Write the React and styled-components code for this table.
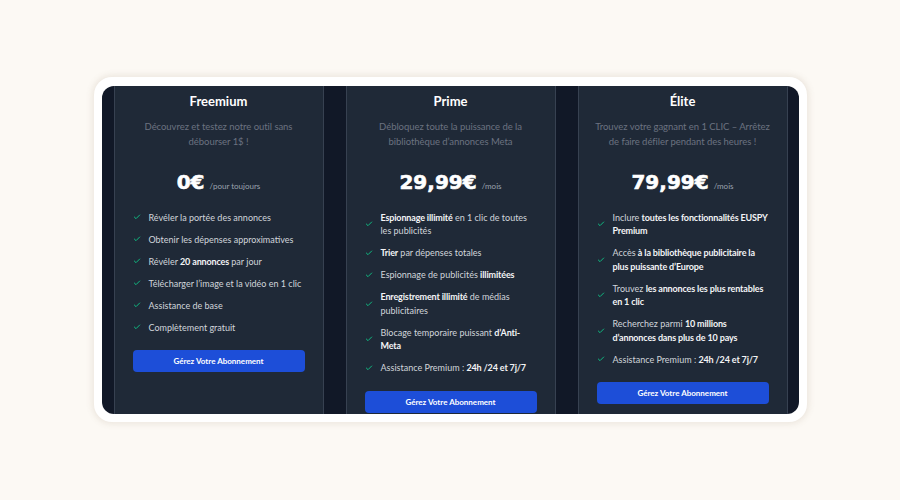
import React from "react";
import styled, { createGlobalStyle } from "styled-components";

const GlobalStyle = createGlobalStyle`
  html, body {
    margin: 0;
    padding: 0;
    background: #fcf9f4;
  }
  body {
    font-family: Lato, "Open Sans", sans-serif;
  }
`;

const plans = [
  {
    name: "Freemium",
    desc: "Découvrez et testez notre outil sans débourser 1$ !",
    price: "0€",
    period: "/pour toujours",
    features: [
      ["Révéler la portée des annonces"],
      ["Obtenir les dépenses approximatives"],
      ["Révéler ", <b key="b">20 annonces</b>, " par jour"],
      ["Télécharger l’image et la vidéo en 1 clic"],
      ["Assistance de base"],
      ["Complètement gratuit"],
    ],
  },
  {
    name: "Prime",
    desc: "Débloquez toute la puissance de la bibliothèque d’annonces Meta",
    price: "29,99€",
    period: "/mois",
    features: [
      [<b key="b">Espionnage illimité</b>, " en 1 clic de toutes", <br key="r" />, "les publicités"],
      [<b key="b">Trier</b>, " par dépenses totales"],
      ["Espionnage de publicités ", <b key="b">illimitées</b>],
      [<b key="b">Enregistrement illimité</b>, " de médias", <br key="r" />, "publicitaires"],
      ["Blocage temporaire puissant ", <b key="b">d’Anti-<br />Meta</b>],
      ["Assistance Premium : ", <b key="b">24h /24 et 7j/7</b>],
    ],
  },
  {
    name: "Élite",
    desc: "Trouvez votre gagnant en 1 CLIC – Arrêtez de faire défiler pendant des heures !",
    price: "79,99€",
    period: "/mois",
    features: [
      ["Inclure ", <b key="b">toutes les fonctionnalités EUSPY<br />Premium</b>],
      ["Accès ", <b key="b">à la bibliothèque publicitaire la<br />plus puissante d’Europe</b>],
      ["Trouvez ", <b key="b">les annonces les plus rentables<br />en 1 clic</b>],
      ["Recherchez parmi ", <b key="b">10 millions<br />d’annonces dans plus de 10 pays</b>],
      ["Assistance Premium : ", <b key="b">24h /24 et 7j/7</b>],
    ],
  },
];

function CheckIcon() {
  return (
    <svg width="8" height="8" viewBox="0 0 24 24" fill="none" stroke="#10b981" strokeWidth="3" strokeLinecap="round" strokeLinejoin="round">
      <polyline points="20 6 9 17 4 12" />
    </svg>
  );
}

function PlanCard({ plan }) {
  return (
    <Card>
      <Title>{plan.name}</Title>
      <Desc>{plan.desc}</Desc>
      <PriceRow>
        <Price>{plan.price}</Price>
        <Period>{plan.period}</Period>
      </PriceRow>
      <Features>
        {plan.features.map((f, i) => (
          <Feature key={i}>
            <CheckWrap>
              <CheckIcon />
            </CheckWrap>
            <span>{f}</span>
          </Feature>
        ))}
      </Features>
      <Button>Gérez Votre Abonnement</Button>
    </Card>
  );
}

export default function App() {
  return (
    <>
      <GlobalStyle />
      <Page>
        <Frame>
          <Panel>
            {plans.map((p) => (
              <PlanCard key={p.name} plan={p} />
            ))}
          </Panel>
        </Frame>
      </Page>
    </>
  );
}

const Page = styled.div`
  width: 900px;
  height: 500px;
  display: flex;
  align-items: center;
  justify-content: center;
`;

const Frame = styled.div`
  width: 697px;
  padding: 9px 8px 8px 8px;
  background: #ffffff;
  border-radius: 18px;
  box-shadow: 0 0 6px 2px rgba(120, 100, 70, 0.12);
  margin-top: -2px;
`;

const Panel = styled.div`
  height: 328px;
  background: #111827;
  border-radius: 12px;
  overflow: hidden;
  display: grid;
  grid-template-columns: repeat(3, 1fr);
  gap: 22px;
  padding: 0 11px 0 12px;
  align-items: start;
`;

const Card = styled.div`
  min-height: 360px;
  background: #1f2937;
  border-left: 1px solid #374151;
  border-right: 1px solid #374151;
  padding: 6px 18px 0 18px;
  display: flex;
  flex-direction: column;
`;

const Title = styled.h3`
  margin: 0;
  text-align: center;
  color: #ffffff;
  font-size: 13px;
  line-height: 18px;
  font-weight: 700;
`;

const Desc = styled.p`
  margin: 9px -4px 0;
  text-align: center;
  color: #6b7280;
  font-size: 9.5px;
  line-height: 15px;
  font-weight: 400;
  letter-spacing: -0.05px;
`;

const PriceRow = styled.div`
  margin-top: 19px;
  display: flex;
  justify-content: center;
  align-items: baseline;
  gap: 5px;
`;

const Price = styled.span`
  font-family: "DejaVu Sans", sans-serif;
  font-weight: 700;
  font-size: 20px;
  line-height: 28px;
  color: #ffffff;
  -webkit-text-stroke: 0.6px #ffffff;
`;

const Period = styled.span`
  font-size: 8px;
  color: #9ca3af;
`;

const Features = styled.ul`
  list-style: none;
  margin: 15px -6px 0 0;
  padding: 0;
  display: flex;
  flex-direction: column;
  gap: 8.5px;
`;

const Feature = styled.li`
  display: flex;
  align-items: center;
  gap: 8px;
  font-size: 9px;
  line-height: 13.5px;
  color: #d1d5db;
  b {
    font-weight: 700;
    color: #f3f4f6;
    letter-spacing: -0.15px;
  }
`;

const CheckWrap = styled.span`
  flex: 0 0 8px;
  display: flex;
  align-items: center;
`;

const Button = styled.button`
  margin-top: 16px;
  height: 22px;
  border: none;
  border-radius: 4px;
  background: #1d4ed8;
  color: #ffffff;
  font-family: Lato, sans-serif;
  font-size: 8px;
  font-weight: 700;
  cursor: pointer;
`;
